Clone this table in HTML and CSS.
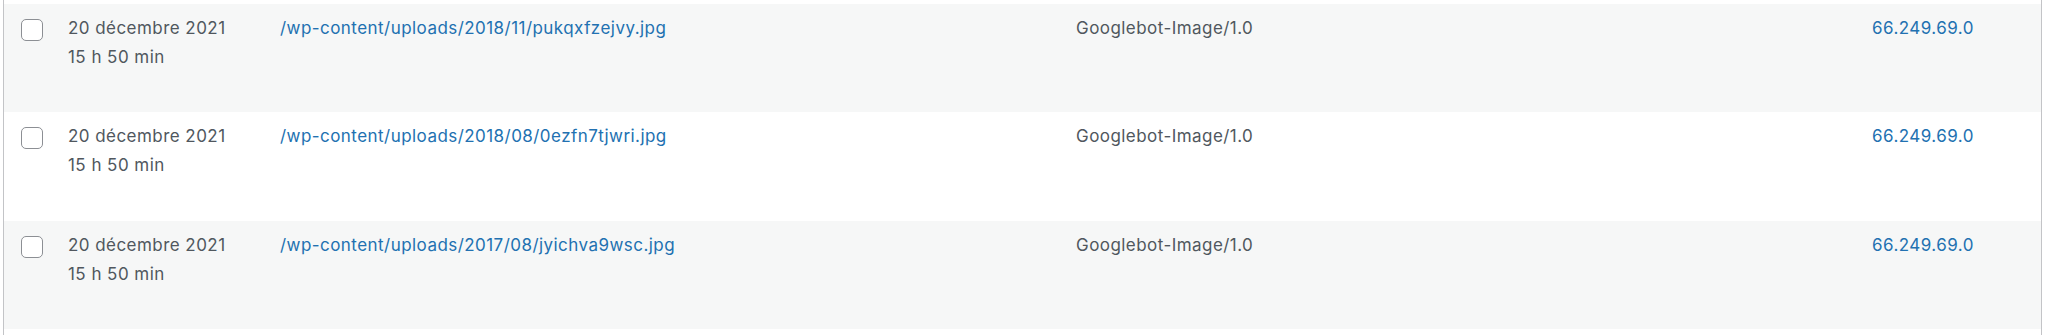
FILE: index.html
```html
<!DOCTYPE html>
<html lang="fr">
<head>
    <meta charset="UTF-8">
    <title>Journal des accès - images</title>
    <link rel="stylesheet" href="styles.css">
</head>
<body>
    <div class="table-wrap">
        <table class="log-table">
            <colgroup>
                <col class="col-cb">
                <col class="col-date">
                <col class="col-url">
                <col class="col-agent">
                <col class="col-ip">
            </colgroup>
            <tbody>
                <tr class="alternate">
                    <td class="check-column"><input type="checkbox" name="log[]" value="1"></td>
                    <td class="column-date">20 décembre 2021<br>15 h 50 min</td>
                    <td><a href="#">/wp-content/uploads/2018/11/pukqxfzejvy.jpg</a></td>
                    <td>Googlebot-Image/1.0</td>
                    <td><a href="#">66.249.69.0</a></td>
                </tr>
                <tr>
                    <td class="check-column"><input type="checkbox" name="log[]" value="2"></td>
                    <td class="column-date">20 décembre 2021<br>15 h 50 min</td>
                    <td><a href="#">/wp-content/uploads/2018/08/0ezfn7tjwri.jpg</a></td>
                    <td>Googlebot-Image/1.0</td>
                    <td><a href="#">66.249.69.0</a></td>
                </tr>
                <tr class="alternate">
                    <td class="check-column"><input type="checkbox" name="log[]" value="3"></td>
                    <td class="column-date">20 décembre 2021<br>15 h 50 min</td>
                    <td><a href="#">/wp-content/uploads/2017/08/jyichva9wsc.jpg</a></td>
                    <td>Googlebot-Image/1.0</td>
                    <td><a href="#">66.249.69.0</a></td>
                </tr>
            </tbody>
        </table>
    </div>
</body>
</html>
```

FILE: styles.css
```css
body {
    margin: 0;
    background: #fff;
    font-family: Inter, "Noto Sans", sans-serif;
    font-size: 17px;
    letter-spacing: 0.45px;
    color: #50575e;
}
.table-wrap {
    box-sizing: border-box;
    min-height: 100vh;
    margin: 0 6px 0 3px;
    padding-top: 4px; /* fin de la ligne précédente */
    border-left: 1px solid #c3c4c7;
    border-right: 1px solid #c3c4c7;
}
.log-table {
    width: 100%;
    border-collapse: collapse;
    table-layout: fixed;
}
.col-cb { width: 51px; }
.col-date { width: 212px; }
.col-url { width: 796px; }
.col-agent { width: 796px; }
.log-table tr {
    height: 108.4px;
}
.log-table tr.alternate {
    background: #f6f7f7; /* lignes zébrées */
}
.log-table td {
    vertical-align: top;
    padding: 10px 13px 0;
    line-height: 29px;
    white-space: nowrap;
}
.log-table a {
    color: #2271b1;
    text-decoration: none;
}
.log-table .check-column {
    padding: 15px 0 0 17px;
    line-height: 0;
}
.check-column input {
    appearance: none;
    -webkit-appearance: none;
    box-sizing: border-box;
    width: 22px;
    height: 22px;
    margin: 0;
    border: 1px solid #8c8f94;
    border-radius: 5px;
    background: #fff;
}
```
